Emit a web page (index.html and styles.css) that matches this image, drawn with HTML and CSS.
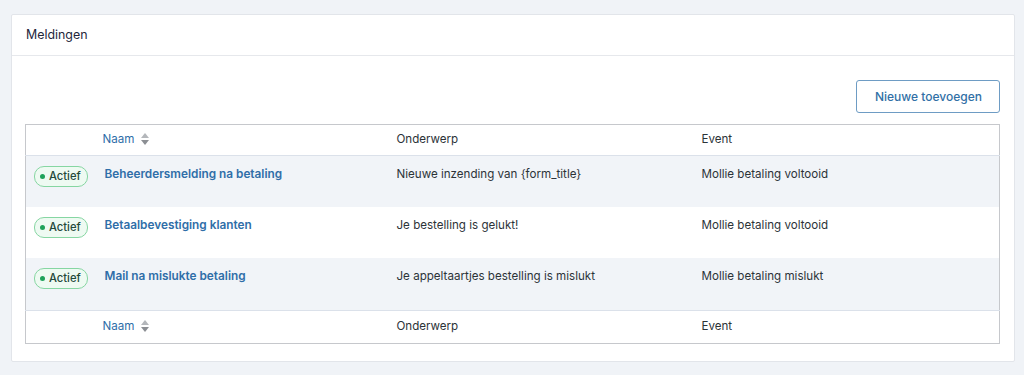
FILE: index.html
```html
<!DOCTYPE html>
<html lang="nl">
<head>
    <meta charset="UTF-8">
    <meta name="viewport" content="width=device-width, initial-scale=1.0">
    <title>Meldingen</title>
    <link rel="stylesheet" href="styles.css">
</head>
<body>
    <div class="card">
        <div class="card-header">Meldingen</div>

        <div class="card-body">
            <div class="actions">
                <a class="button" href="#">Nieuwe toevoegen</a>
            </div>

            <table class="list-table">
                <colgroup>
                    <col class="col-status">
                    <col class="col-name">
                    <col class="col-subject">
                    <col>
                </colgroup>
                <thead>
                    <tr>
                        <th></th>
                        <th><a class="sortable" href="#">Naam <span class="sort-icon"></span></a></th>
                        <th>Onderwerp</th>
                        <th>Event</th>
                    </tr>
                </thead>
                <tbody>
                    <tr class="alt">
                        <td><span class="badge"><span class="dot"></span>Actief</span></td>
                        <td><a class="row-title" href="#">Beheerdersmelding na betaling</a></td>
                        <td>Nieuwe inzending van {form_title}</td>
                        <td>Mollie betaling voltooid</td>
                    </tr>
                    <tr>
                        <td><span class="badge"><span class="dot"></span>Actief</span></td>
                        <td><a class="row-title" href="#">Betaalbevestiging klanten</a></td>
                        <td>Je bestelling is gelukt!</td>
                        <td>Mollie betaling voltooid</td>
                    </tr>
                    <tr class="alt">
                        <td><span class="badge"><span class="dot"></span>Actief</span></td>
                        <td><a class="row-title" href="#">Mail na mislukte betaling</a></td>
                        <td>Je appeltaartjes bestelling is mislukt</td>
                        <td>Mollie betaling mislukt</td>
                    </tr>
                </tbody>
                <tfoot>
                    <tr>
                        <th></th>
                        <th><a class="sortable" href="#">Naam <span class="sort-icon"></span></a></th>
                        <th>Onderwerp</th>
                        <th>Event</th>
                    </tr>
                </tfoot>
            </table>
        </div>
    </div>
</body>
</html>
```

FILE: styles.css
```css
body {
    font-family: Inter, "Noto Sans", sans-serif;
    font-size: 11.6px;
    line-height: 1.5;
    color: #3c434a;
    background: #f0f3f7;
    margin: 0;
    padding: 14px 9px 15px 11px;
}

.card {
    background: white;
    border: 1px solid #e2e5ea;
    border-radius: 2px;
}

.card-header {
    height: 40px;
    line-height: 40px;
    padding: 0 14px;
    font-size: 12.4px;
    color: #23263a;
    border-bottom: 1px solid #e6e8ec;
}

.card-body {
    padding: 24px 14px 17px 13px;
}

.actions {
    display: flex;
    justify-content: flex-end;
    margin-bottom: 11px;
}

.button {
    display: inline-block;
    height: 31px;
    line-height: 31px;
    padding: 0 17px 0 18px;
    border: 1px solid #6e9cc4;
    border-radius: 3px;
    color: #3170a6;
    font-size: 12px;
    font-weight: 500;
    text-decoration: none;
    background: white;
}

/* Table */
.list-table {
    width: 100%;
    border-collapse: collapse;
    table-layout: fixed;
    border: 1px solid #c6c8cc;
}

.col-status { width: 67px; }
.col-name { width: 294px; }
.col-subject { width: 305px; }

.list-table th {
    text-align: left;
    font-weight: 400;
    height: 30px;
    padding: 0 10px;
    color: #2c3338;
}

.list-table tfoot th {
    height: 32px;
}

.list-table thead tr {
    border-bottom: 1px solid #dbe1ea;
}

.list-table tfoot tr {
    border-top: 1px solid #dbe1ea;
}

.list-table td {
    vertical-align: top;
    padding: 10px 10px 6px;
    height: 35px;
    color: #2c3338;
}

.list-table tbody tr:last-child td {
    height: 36px;
}

.list-table td:first-child {
    padding-left: 8px;
    padding-right: 0;
}

.list-table td:nth-child(2) {
    padding-left: 12px;
}

.list-table tr.alt td {
    background: #f1f4f8;
}

.sortable {
    color: #2f6ea8;
    text-decoration: none;
}

.sort-icon {
    display: inline-block;
    width: 8px;
    height: 12px;
    margin-left: 3px;
    vertical-align: -2px;
    position: relative;
}

.sort-icon::before,
.sort-icon::after {
    content: "";
    position: absolute;
    left: 0;
    border-left: 4px solid transparent;
    border-right: 4px solid transparent;
}

.sort-icon::before {
    top: 0;
    border-bottom: 5px solid #b4b7bb;
}

.sort-icon::after {
    bottom: 0;
    border-top: 5px solid #8c8f94;
}

.row-title {
    color: #2f6ea8;
    font-size: 11.8px;
    font-weight: 600;
    text-decoration: none;
}

.badge {
    display: inline-flex;
    align-items: center;
    gap: 4px;
    height: 19px;
    padding: 0 6px 0 5px;
    border: 1px solid #86d6a2;
    border-radius: 10px;
    background: #eefaf2;
    color: #23493a;
    font-size: 11.2px;
    font-weight: 500;
}

.dot {
    width: 5px;
    height: 5px;
    border-radius: 50%;
    background: #1fa25a;
}
```
